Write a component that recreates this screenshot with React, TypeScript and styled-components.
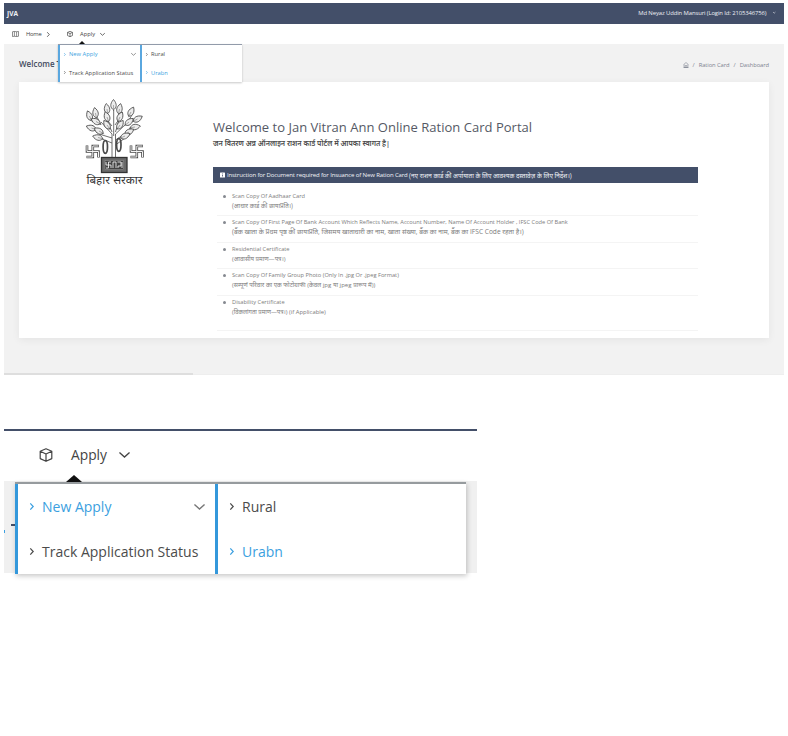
import React from "react";
import styled, { createGlobalStyle, css } from "styled-components";

const navy = "#434f69";
const blue = "#3b9fe0";

const GlobalStyle = createGlobalStyle`
  * { box-sizing: border-box; }
  body { margin: 0; background: #fff; }
  ul { list-style: none; margin: 0; padding: 0; }
  h1, h2, p { margin: 0; }
`;

const Page = styled.div`
  width: 788px;
  height: 736px;
  padding: 3px 4px 0;
  overflow: hidden;
  font-family: "Open Sans", "Noto Sans", sans-serif;
  color: #555;
`;

const Portal = styled.section`
  position: relative;
  width: 780px;
  height: 372px;
  background: #f2f2f2;
  border-bottom: 1px solid #eee;
`;

const TopBar = styled.header`
  display: flex;
  justify-content: space-between;
  align-items: center;
  height: 21px;
  padding: 0 9px 1px 3px;
  background: ${navy};
  color: #eef0f4;
`;

const Brand = styled.strong`
  font-size: 6.6px;
  font-weight: 700;
`;

const User = styled.div`
  display: flex;
  align-items: center;
  gap: 6px;
  font-size: 5.9px;
  white-space: nowrap;
`;

const Fit = styled.span<{ $track?: number; $size?: number }>`
  letter-spacing: ${(p) => p.$track ?? 0}px;
  ${(p) => p.$size && css`font-size: ${p.$size}px;`}
  white-space: nowrap;
`;

const Nav = styled.nav`
  display: flex;
  align-items: center;
  height: 20px;
  padding: 0 8px;
  background: #fff;
  font-size: 5.8px;
  color: #444;
  svg { flex: none; }
`;

const NavItem = styled.span<{ $gap: number; $after?: number }>`
  display: flex;
  align-items: center;
  gap: 5px;
  margin-right: ${(p) => p.$after ?? 0}px;
  svg:first-child { margin-right: ${(p) => p.$gap - 5}px; }
`;

const Menu = styled.div<{ $large?: boolean }>`
  position: absolute;
  display: grid;
  background: #fff;
  ${(p) =>
    p.$large
      ? css`
          left: 11px;
          top: 51px;
          width: 451px;
          height: 92px;
          grid-template-columns: 200px 1fr;
          border-top: 2px solid #969b9e;
          box-shadow: 1px 2px 5px rgba(0, 0, 0, 0.22);
          font-size: 14px;
        `
      : css`
          left: 54px;
          top: 41px;
          width: 184px;
          height: 38px;
          grid-template-columns: 82px 1fr;
          border-top: 1px solid #929baa;
          box-shadow: 0 1px 2px rgba(0, 0, 0, 0.22);
          font-size: 5.75px;
        `}
`;

const Column = styled.div<{ $large?: boolean }>`
  display: grid;
  grid-template-rows: ${(p) => (p.$large ? "45px 45px" : "18.5px 18.5px")};
  border-left: ${(p) => (p.$large ? 3 : 2)}px solid ${(p) => (p.$large ? "#3498db" : "#5aa7df")};
`;

const Entry = styled.div<{ $active?: boolean; $large?: boolean }>`
  display: flex;
  align-items: center;
  gap: ${(p) => (p.$large ? 9 : 3.5)}px;
  padding: 0 ${(p) => (p.$large ? 10 : 4)}px 0 ${(p) => (p.$large ? 11.5 : 4)}px;
  color: ${(p) => (p.$active ? blue : "#4b4b4b")};
  white-space: nowrap;
  svg { flex: none; }
  svg:last-child:not(:first-child) { margin-left: auto; color: #777; }
`;

const Caret = styled.i<{ $large?: boolean }>`
  position: absolute;
  left: ${(p) => (p.$large ? 62 : 75)}px;
  top: ${(p) => (p.$large ? 44 : 38)}px;
  border: ${(p) => (p.$large ? 8 : 3)}px solid transparent;
  border-bottom: ${(p) => (p.$large ? 7 : 3)}px solid #111;
  border-top: 0;
`;

const TitleRow = styled.div`
  display: flex;
  justify-content: space-between;
  align-items: center;
  height: 38px;
  padding: 3px 15px 0;
`;

const PageTitle = styled.h2`
  font-size: 8px;
  line-height: 10px;
  margin-bottom: 1px;
  font-weight: 600;
  color: #434b5e;
`;

const Crumbs = styled.div`
  display: flex;
  align-items: center;
  gap: 4px;
  padding-top: 1px;
  font-size: 5.8px;
  color: #7d8390;
`;

const Card = styled.main`
  display: grid;
  grid-template-columns: 194px 485px;
  width: 750px;
  height: 256px;
  margin-left: 15px;
  background: #fff;
  box-shadow: 0 2px 8px rgba(0, 0, 0, 0.06);
`;

const EmblemBox = styled.figure`
  display: flex;
  flex-direction: column;
  align-items: center;
  margin: 0;
  padding: 16px 3px 0 0;
`;

const EmblemName = styled.figcaption`
  margin-top: -2px;
  font-size: 11.7px;
  line-height: 16px;
  color: #333;
`;

const Content = styled.div`
  padding-top: 37px;
`;

const Heading = styled.h1`
  font-size: 13px;
  line-height: 17px;
  font-weight: 400;
  letter-spacing: 0.02px;
  color: #555965;
`;

const Greeting = styled.p`
  height: 31px;
  font-size: 7.2px;
  line-height: 14px;
  font-weight: 600;
  color: #4a4a4a;
`;

const Notice = styled.div`
  display: flex;
  align-items: center;
  height: 16px;
  padding-left: 7px;
  background: ${navy};
  color: #f2f4f8;
  font-size: 6px;
  svg { margin-right: 2px; }
`;

const Documents = styled.ul`
  padding: 7px 0 0 4px;
`;

const Doc = styled.li`
  display: grid;
  grid-template-columns: 10px 1fr;
  height: 26.4px;
  padding: 1px 0 0 5px;
  border-bottom: 1px solid #f4f4f4;
  font-size: 5.7px;
  line-height: 10px;
  color: #7c7c7c;
  white-space: nowrap;
  &:last-child { height: 35px; }
`;

const Line = styled.div`
  height: 10px;
`;

const Dot = styled.i`
  width: 3px;
  height: 3px;
  margin: 4px 0 0 1px;
  border-radius: 50%;
  background: #858990;
`;

const ScrollBar = styled.div`
  position: absolute;
  left: 0;
  bottom: -1px;
  width: 189px;
  height: 2px;
  background: #dedede;
`;

const Detail = styled.section`
  position: relative;
  width: 473px;
  height: 144px;
  margin-top: 54px;
  border-top: 2px solid ${navy};
  background: #f0f0f0;
`;

const DetailNav = styled.nav`
  display: flex;
  align-items: center;
  height: 50px;
  padding: 0 0 3px 35px;
  background: #fff;
  font-size: 13.8px;
  color: #444;
`;

const DetailLabel = styled.span`
  margin: 0 12px 0 18px;
`;

const TitleFragment = styled.div`
  width: 11px;
  height: 91px;
  padding: 43px 0 0 7px;
  color: ${navy};
  &::before {
    content: "";
    display: block;
    width: 4px;
    height: 2px;
    background: currentColor;
  }
  &::after {
    content: "";
    display: block;
    width: 1px;
    height: 3px;
    margin: 4px 0 0 -7px;
    background: ${blue};
  }
`;

const Chevron = ({ size, down, weight = 1 }: { size: number; down?: boolean; weight?: number }) => (
  <svg width={down ? size : size / 2} height={down ? size / 2 : size} viewBox={down ? "0 0 12 6" : "0 0 6 12"} fill="none" stroke="currentColor" strokeWidth={(weight * 12) / size} overflow="visible">
    <path d={down ? "M.5.5 6 5.5 11.5.5" : "M.5.5 5.5 6 .5 11.5"} />
  </svg>
);

const Cube = ({ size, weight }: { size: number; weight: number }) => (
  <svg width={size} height={size} viewBox="0 0 14 14" fill="none" stroke="currentColor" strokeWidth={weight} strokeLinejoin="round">
    <path d="M7 .8 12.8 3.3V10.6L7 13.3 1.2 10.6V3.3ZM1.2 3.3 7 6 12.8 3.3M7 6V13.3" />
  </svg>
);

const MapIcon = () => (
  <svg width="7" height="6" viewBox="0 0 14 12" fill="none" stroke="currentColor" strokeWidth="1.2">
    <path d="M1 1.5 4.8.8 9.2 1.5 13 .8V10.5L9.2 11.2 4.8 10.5 1 11.2ZM4.8.8V10.5M9.2 1.5V11.2" />
  </svg>
);

const HomeIcon = () => (
  <svg width="6" height="6" viewBox="0 0 12 12" fill="none" stroke="currentColor" strokeWidth="1.2">
    <path d="M1 5.5 6 1 11 5.5M2.2 5V11H9.8V5M1 11H11M4.5 11V7H7.5V11" />
  </svg>
);

const InfoIcon = () => (
  <svg width="5" height="6" viewBox="0 0 10 12">
    <rect y="1" width="10" height="10" rx="1" fill="#fff" />
    <path d="M5 3V4.5M5 5.5V9" stroke={navy} strokeWidth="1.6" />
  </svg>
);

const leaves: [number, number, number][] = [
  [28.5, 7, 0], [22, 11, -8], [34.5, 11, 12], [22, 19, -20], [35, 19, 25],
  [22, 27, -35], [35, 27, 35], [10.5, 15, -10], [4.5, 18, -22], [11, 23.5, -60],
  [6.5, 30, -70], [14, 33, -60], [13, 39.5, -75], [46, 14, 28], [52.5, 21, 60],
  [44, 24, 50], [50, 29, 80], [44, 34, 60], [40, 38, 65],
];

const Swastik = ({ x, y }: { x: number; y: number }) => (
  <g transform={`translate(${x} ${y})`} fill="none">
    <path d="M1 .5V6.5H12.5V12.5M13 1H6.8V12H.5" stroke="#484848" strokeWidth="2.6" />
    <path d="M1 1V6.5H12.5V12M12.5 1H6.8V12H1" stroke="#f4f4f4" strokeWidth="1" />
  </g>
);

const Emblem = () => (
  <svg width="60" height="75" viewBox="0 0 60 75" fill="none" stroke="#4a4a4a" strokeWidth=".8" overflow="visible">
    <path d="M27 59V36L16 24M27 40 14 36M27 45 17 41M27 34 22 22M30.5 59V36L42 25M30.5 42 44 33M30.5 47 40 40M30.5 34 34 22M28.7 12V38M12 35 7 27M16 27 11 17M42 25 47 17M44 31 50 28M27 28 22 22M30 27 35 20" />
    {leaves.map(([x, y, r], i) => (
      <g key={i} transform={`translate(${x} ${y}) rotate(${r})`}>
        <path d="M0-5.5C-4-1-3.2 3 0 4.8 3.2 3 4-1 0-5.5Z" fill="#ececec" />
        <path d="M0 0V6" strokeWidth=".4" />
      </g>
    ))}
    <ellipse cx="20.3" cy="49" rx="2.2" ry="6.3" strokeWidth="1.7" />
    <ellipse cx="33.8" cy="47" rx="2.2" ry="6.3" strokeWidth="1.7" />
    <Swastik x={1} y={47} />
    <Swastik x={45} y={47} />
    <rect x="16.5" y="59.5" width="25.5" height="15" fill="#6a6a6a" stroke="#333" strokeWidth="1.3" />
    <rect x="20" y="62.5" width="18.5" height="9" fill="#444" stroke="#999" strokeWidth=".5" />
    <path d="M21 64V67H26V70M26 64H23.5V70H21M28 70V64H31V70M32.5 64H36V68H33V70M37 64V70" stroke="#fff" />
  </svg>
);

const documents = [
  { title: "Scan Copy Of Aadhaar Card", hindi: "(आधार कार्ड की छायाप्रति।)", size: 6.2 },
  { title: "Scan Copy Of First Page Of Bank Account Which Reflects Name, Account Number, Name Of Account Holder , IFSC Code Of Bank", hindi: "(बैंक खाता के प्रथम पृष्ठ की छायाप्रति, जिसमय खाताधारी का नाम, खाता संख्या, बैंक का नाम, बैंक का IFSC Code रहता है।)", size: 6.6 },
  { title: "Residential Certificate", hindi: "(आवासीय प्रमाण—पत्र।)", size: 6.05 },
  { title: "Scan Copy Of Family Group Photo (Only In .jpg Or .jpeg Format)", hindi: "(सम्पूर्ण परिवार का एक फोटोग्राफी (केवल jpg या jpeg प्रारूप में))", size: 6.1 },
  { title: "Disability Certificate", hindi: "(विकलांगता प्रमाण—पत्र।) (if Applicable)", size: 5.9 },
];

const ApplyMenu = ({ large }: { large?: boolean }) => {
  const arrow = <Chevron size={large ? 7 : 3} weight={large ? 1.2 : 0.6} />;
  return (
    <>
      <Caret $large={large} />
      <Menu $large={large}>
        <Column $large={large}>
          <Entry $large={large} $active>{arrow}<Fit>New Apply</Fit><Chevron size={large ? 11 : 5} down weight={large ? 1.4 : 0.8} /></Entry>
          <Entry $large={large}>{arrow}<Fit>Track Application Status</Fit></Entry>
        </Column>
        <Column $large={large}>
          <Entry $large={large}>{arrow}<Fit>Rural</Fit></Entry>
          <Entry $large={large} $active>{arrow}<Fit>Urabn</Fit></Entry>
        </Column>
      </Menu>
    </>
  );
};

export default function App() {
  return (
    <Page>
      <GlobalStyle />
      <Portal>
        <TopBar>
          <Brand>JVA</Brand>
          <User><Fit $track={-0.1}>Md Neyaz Uddin Mansuri (Login Id: 2105346756)</Fit><Chevron size={2.5} down weight={0.6} /></User>
        </TopBar>
        <Nav>
          <NavItem $gap={7} $after={18}><MapIcon /><Fit $track={-0.2}>Home</Fit><Chevron size={5} weight={0.8} /></NavItem>
          <NavItem $gap={7}><Cube size={6} weight={1.6} /><Fit>Apply</Fit><Chevron size={5} down weight={0.8} /></NavItem>
        </Nav>
        <TitleRow>
          <PageTitle>Welcome T</PageTitle>
          <Crumbs><HomeIcon /><span>/</span><Fit $track={-0.07}>Ration Card</Fit><span>/</span><Fit $track={-0.07}>Dashboard</Fit></Crumbs>
        </TitleRow>
        <Card>
          <EmblemBox><Emblem /><EmblemName>बिहार सरकार</EmblemName></EmblemBox>
          <Content>
            <Heading>Welcome to Jan Vitran Ann Online Ration Card Portal</Heading>
            <Greeting><Fit>जन वितरण अन्न ऑनलाइन राशन कार्ड पोर्टल में आपका स्वागत है|</Fit></Greeting>
            <Notice>
              <InfoIcon />
              <Fit $track={-0.12}>Instruction for Document required for Insuance of New Ration Card&nbsp;</Fit>
              <Fit $size={6.35}>(नए राशन कार्ड की अर्पायाता के लिए आवश्यक दस्तावेज़ के लिए निर्देश।)</Fit>
            </Notice>
            <Documents>
              {documents.map((d) => (
                <Doc key={d.title}>
                  <Dot />
                  <div>
                    <Line><Fit>{d.title}</Fit></Line>
                    <Line><Fit $size={d.size}>{d.hindi}</Fit></Line>
                  </div>
                </Doc>
              ))}
            </Documents>
          </Content>
        </Card>
        <ApplyMenu />
        <ScrollBar />
      </Portal>
      <Detail>
        <DetailNav><Cube size={14} weight={1.2} /><DetailLabel>Apply</DetailLabel><Chevron size={11} down weight={1.3} /></DetailNav>
        <TitleFragment />
        <ApplyMenu large />
      </Detail>
    </Page>
  );
}
